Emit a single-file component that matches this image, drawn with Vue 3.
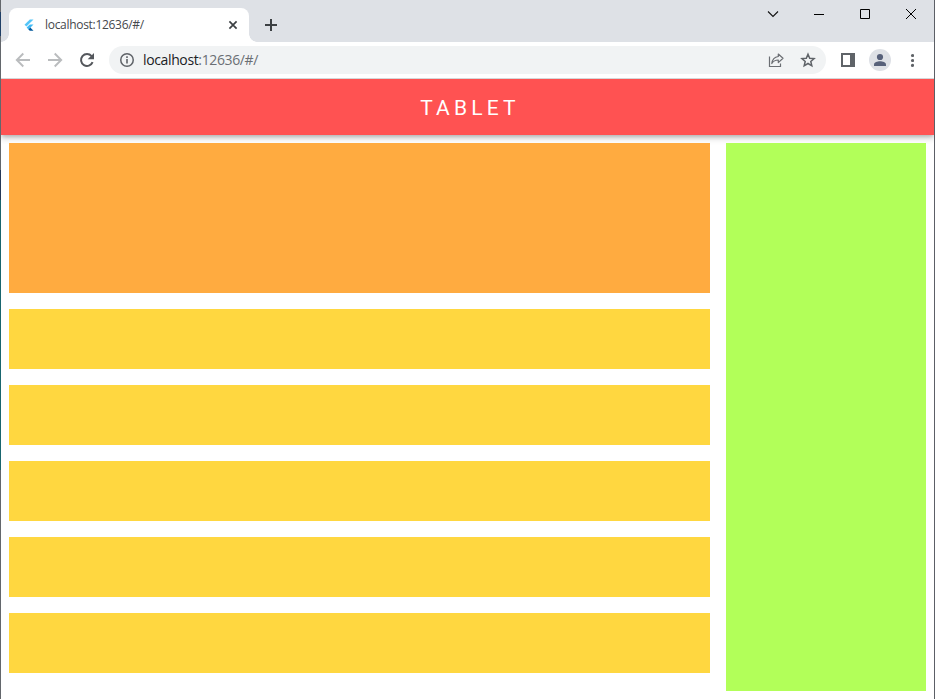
<script setup>
const rows = [1, 2, 3, 4, 5]
</script>

<template>
  <div class="desktop">
    <div class="window">
      <div class="tabstrip">
        <div class="tab">
          <svg class="logo" width="16" height="16" viewBox="0 0 16 16">
            <path d="M8.800 2.500h3.700L5.400 9.500 3.500 7.700z" fill="#54c5f8" />
            <path d="M8.800 7.500h3.700l-3.200 3.200-1.800 1.800-1.900-1.900z" fill="#40b9f5" />
            <path d="M7.400 12.400l1.900-1.800 3.200 3.100H8.800z" fill="#01579b" />
          </svg>
          <span class="tab-title">localhost:12636/#/</span>
          <svg class="tab-close" width="16" height="16" viewBox="0 0 16 16">
            <path d="M4.400 4.400l7.200 7.200M11.600 4.400l-7.200 7.200" stroke="#3c4043" stroke-width="1.700" fill="none" />
          </svg>
        </div>
        <svg class="new-tab" width="16" height="16" viewBox="0 0 16 16">
          <path d="M8 2v12M2 8h12" stroke="#3c4043" stroke-width="2" />
        </svg>
        <div class="controls">
          <svg width="46" height="28" viewBox="0 0 46 28"><path d="M18 11.500l5 5 5-5" stroke="#111" stroke-width="1.100" fill="none" /></svg>
          <svg width="46" height="28" viewBox="0 0 46 28"><path d="M18 14.500h10" stroke="#000" /></svg>
          <svg width="46" height="28" viewBox="0 0 46 28"><path d="M18.500 9.500h9v9h-9z" stroke="#000" fill="none" /></svg>
          <svg width="46" height="28" viewBox="0 0 46 28"><path d="M18 9l10 10M28 9L18 19" stroke="#000" fill="none" /></svg>
        </div>
      </div>

      <div class="toolbar">
        <svg class="nav" width="16" height="16" viewBox="0 0 16 16">
          <path d="M15 8H2M8.300 1.500L1.800 8l6.500 6.500" stroke="#babcbe" stroke-width="1.900" fill="none" />
        </svg>
        <svg class="nav" width="16" height="16" viewBox="0 0 16 16">
          <path d="M1 8h13M7.700 1.500L14.200 8l-6.500 6.500" stroke="#babcbe" stroke-width="1.900" fill="none" />
        </svg>
        <svg class="nav" width="16" height="16" viewBox="0 0 16 16">
          <path d="M13.600 10.200A6 6 0 1 1 12.600 4.100" stroke="#54575c" stroke-width="2" fill="none" />
          <path d="M15 1v6.300H8.700z" fill="#54575c" />
        </svg>
        <div class="address">
          <svg width="16" height="16" viewBox="0 0 16 16">
            <circle cx="8" cy="8" r="6.250" stroke="#5f6368" stroke-width="1.500" fill="none" />
            <path d="M8 7v4.600M8 4.300v1.600" stroke="#5f6368" stroke-width="1.600" />
          </svg>
          <span class="url">localhost<span class="port">:12636/#/</span></span>
          <svg class="share" width="16" height="16" viewBox="0 0 16 16">
            <path d="M1.500 4.500v10h11v-3" stroke="#6b6e73" stroke-width="1.200" fill="none" />
            <path d="M10.300 2l4.700 4.300-4.700 4.300V8C7.500 8 5.300 9 3.800 11.500 4.300 7.500 6.500 5 10.300 4.500z" stroke="#6b6e73" stroke-width="1.200" stroke-linejoin="round" fill="none" />
          </svg>
          <svg width="16" height="16" viewBox="0 0 16 16">
            <path d="M8 2.200l1.700 4 4.400.4-3.300 2.900 1 4.300L8 11.500l-3.800 2.300 1-4.300-3.300-2.900 4.400-.4z" stroke="#5f6368" stroke-width="1.500" fill="none" />
          </svg>
        </div>
        <svg class="panel" width="14" height="14" viewBox="0 0 14 14">
          <path d="M0 0h14v14H0zM2 2v10h7V2z" fill="#5f6368" fill-rule="evenodd" />
        </svg>
        <svg class="avatar" width="22" height="22" viewBox="0 0 22 22">
          <circle cx="11" cy="11" r="11" fill="#dee1e6" />
          <circle cx="11" cy="8" r="3.100" fill="#57617a" />
          <path d="M5 17v-1.600c0-2.100 3.500-3.200 6-3.200s6 1.100 6 3.200V17z" fill="#57617a" />
        </svg>
        <svg class="more" width="4" height="14" viewBox="0 0 4 14">
          <g fill="#5f6368"><circle cx="2.500" cy="2.500" r="1.600" /><circle cx="2.500" cy="7.500" r="1.600" /><circle cx="2.500" cy="12.400" r="1.600" /></g>
        </svg>
      </div>

      <header class="appbar">TABLET</header>
      <main class="content">
        <div class="left">
          <div class="hero"></div>
          <div v-for="row in rows" :key="row" class="row"></div>
        </div>
        <aside class="side"></aside>
      </main>
    </div>
  </div>
</template>

<style>
body {
  margin: 0;
  overflow: hidden;
}
</style>

<style scoped>
.desktop {
  box-sizing: border-box;
  width: 935px;
  height: 699px;
  padding: 0 1px;
  background:
    linear-gradient(#5c5f66, #5c5f66) right / 1px 100% no-repeat,
    linear-gradient(#63676c 0 12px, #1f3f66 12px 36px, #63676c 36px 170px, #253858 170px 200px, #19666f 200px 470px, #63676c 470px);
}
.window {
  display: flex;
  flex-direction: column;
  height: 100%;
  background: #fff;
}
svg {
  display: block;
  flex: none;
}
.tabstrip {
  display: flex;
  height: 42px;
  flex: none;
  background: #dee1e6;
}
.tab {
  display: flex;
  align-items: center;
  box-sizing: border-box;
  width: 240px;
  height: 34px;
  margin: 8px 0 0 8px;
  padding: 0 8px 0 12px;
  border-radius: 8px 8px 0 0;
  background: #fff;
  position: relative;
}
.tab::before,
.tab::after {
  content: "";
  position: absolute;
  bottom: 0;
  width: 8px;
  height: 8px;
}
.tab::before {
  left: -8px;
  background: radial-gradient(circle at 0 0, transparent 7.5px, #fff 8px);
}
.tab::after {
  right: -8px;
  background: radial-gradient(circle at 100% 0, transparent 7.5px, #fff 8px);
}
.tab-title {
  margin-left: 8px;
  font: 12px/16px "Open Sans", "Noto Sans", sans-serif;
  letter-spacing: -0.3px;
  color: #45484c;
}
.tab-close {
  margin-left: auto;
}
.new-tab {
  margin: 17px 0 0 14px;
}
.controls {
  display: flex;
  margin-left: auto;
}
.toolbar {
  display: flex;
  align-items: center;
  box-sizing: border-box;
  height: 37px;
  flex: none;
  padding: 0 20px 0 14px;
  border-bottom: 1px solid #d5d6d8;
}
.nav {
  margin-right: 16px;
}
.address {
  display: flex;
  align-items: center;
  box-sizing: border-box;
  width: 717px;
  height: 28px;
  margin-left: -2px;
  padding: 0 10px;
  border-radius: 14px;
  background: #f1f3f4;
}
.url {
  margin-left: 8px;
  font: 14px/20px "Open Sans", "Noto Sans", sans-serif;
  letter-spacing: -0.37px;
  color: #202124;
}
.port {
  color: #6b6f74;
}
.share {
  margin: 0 16px 0 auto;
}
.panel {
  margin-left: 15px;
}
.avatar {
  margin-left: 14px;
}
.more {
  margin-left: auto;
}
.appbar {
  box-sizing: border-box;
  height: 56px;
  flex: none;
  padding-left: 5px;
  background: #ff5252;
  box-shadow: 0 2px 4px -1px rgba(0, 0, 0, 0.2), 0 4px 5px rgba(0, 0, 0, 0.12), 0 1px 10px rgba(0, 0, 0, 0.08);
  clip-path: inset(0 0 -12px 0);
  color: #fff;
  font: 21px/58px Roboto, sans-serif;
  letter-spacing: 4.2px;
  text-align: center;
}
.content {
  display: flex;
  flex: 1;
  gap: 16px;
  padding: 8px;
  position: relative;
}
.left {
  display: flex;
  flex: 1;
  flex-direction: column;
  gap: 16px;
}
.hero {
  height: 150px;
  background: #ffab40;
}
.row {
  height: 60px;
  background: #ffd740;
}
.side {
  width: 200px;
  background: #b2ff59;
}
</style>
